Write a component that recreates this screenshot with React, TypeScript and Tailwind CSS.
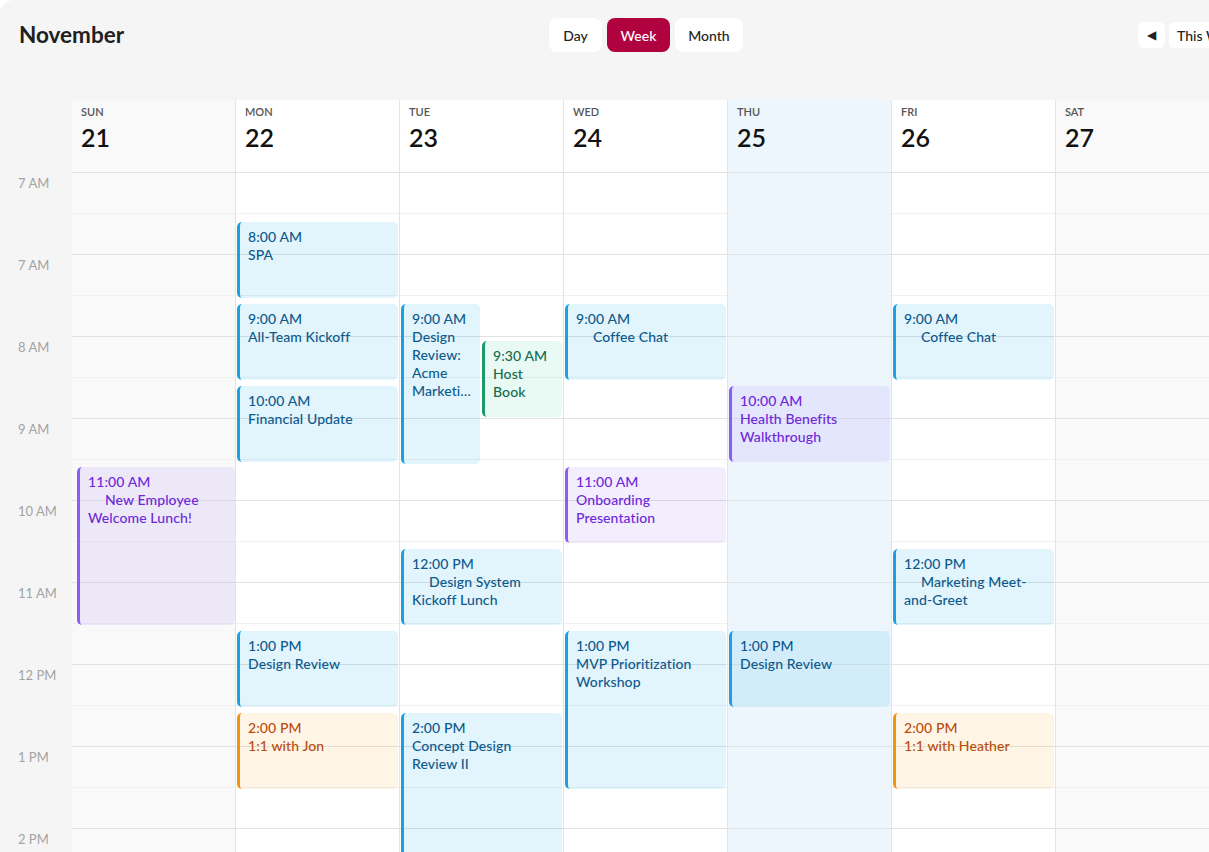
import React from 'react'

type Tone = 'blue' | 'green' | 'purple' | 'orange'

interface CalEvent {
  time: string
  title: string
  top: number
  height: number
  tone: Tone
  indent?: boolean
  clamp?: boolean
  left?: string
}

const toneClass: Record<Tone, string> = {
  blue: 'bg-[rgba(14,165,233,0.12)] border-[#1ba1e2] text-[#0d5a8c]',
  green: 'bg-[rgba(16,185,129,0.09)] border-[#1a9a6a] text-[#136b4a]',
  purple: 'bg-[rgba(139,92,246,0.1)] border-[#8b5cf6] text-[#6d28d9]',
  orange: 'bg-[rgba(245,158,11,0.1)] border-[#f0950e] text-[#b94d0c]',
}

const days: { abbr: string; date: string; bg: string; events: CalEvent[] }[] = [
  {
    abbr: 'SUN',
    date: '21',
    bg: 'bg-[#f9f9f9]',
    events: [
      { time: '11:00 AM', title: 'New Employee Welcome Lunch!', top: 294, height: 158, tone: 'purple', indent: true, left: 'left-[5px] right-0' },
    ],
  },
  {
    abbr: 'MON',
    date: '22',
    bg: 'bg-white',
    events: [
      { time: '8:00 AM', title: 'SPA', top: 49, height: 76, tone: 'blue' },
      { time: '9:00 AM', title: 'All-Team Kickoff', top: 131, height: 76, tone: 'blue' },
      { time: '10:00 AM', title: 'Financial Update', top: 213, height: 76, tone: 'blue' },
      { time: '1:00 PM', title: 'Design Review', top: 458, height: 76, tone: 'blue' },
      { time: '2:00 PM', title: '1:1 with Jon', top: 540, height: 76, tone: 'orange' },
    ],
  },
  {
    abbr: 'TUE',
    date: '23',
    bg: 'bg-white',
    events: [
      { time: '9:00 AM', title: 'Design Review: Acme Marketing Site', top: 131, height: 160, tone: 'blue', clamp: true, left: 'left-[1px] w-[79px]' },
      { time: '9:30 AM', title: 'Host Book', top: 168, height: 76, tone: 'green', left: 'left-[82px] right-[1px]' },
      { time: '12:00 PM', title: 'Design System Kickoff Lunch', top: 376, height: 76, tone: 'blue', indent: true },
      { time: '2:00 PM', title: 'Concept Design Review II', top: 540, height: 200, tone: 'blue' },
    ],
  },
  {
    abbr: 'WED',
    date: '24',
    bg: 'bg-white',
    events: [
      { time: '9:00 AM', title: 'Coffee Chat', top: 131, height: 76, tone: 'blue', indent: true },
      { time: '11:00 AM', title: 'Onboarding Presentation', top: 294, height: 76, tone: 'purple' },
      { time: '1:00 PM', title: 'MVP Prioritization Workshop', top: 458, height: 158, tone: 'blue' },
    ],
  },
  {
    abbr: 'THU',
    date: '25',
    bg: 'bg-[#eef6fd]',
    events: [
      { time: '10:00 AM', title: 'Health Benefits Walkthrough', top: 213, height: 76, tone: 'purple' },
      { time: '1:00 PM', title: 'Design Review', top: 458, height: 76, tone: 'blue' },
    ],
  },
  {
    abbr: 'FRI',
    date: '26',
    bg: 'bg-white',
    events: [
      { time: '9:00 AM', title: 'Coffee Chat', top: 131, height: 76, tone: 'blue', indent: true },
      { time: '12:00 PM', title: 'Marketing Meet-and-Greet', top: 376, height: 76, tone: 'blue', indent: true },
      { time: '2:00 PM', title: '1:1 with Heather', top: 540, height: 76, tone: 'orange' },
    ],
  },
  {
    abbr: 'SAT',
    date: '27',
    bg: 'bg-[#f9f9f9]',
    events: [],
  },
]

const hours = ['7 AM', '7 AM', '8 AM', '9 AM', '10 AM', '11 AM', '12 PM', '1 PM', '2 PM']

function EventCard({ ev }: { ev: CalEvent }) {
  return (
    <div
      className={`absolute ${ev.left ?? 'left-[1px] right-[1px]'} rounded-[5px] border-l-[3px] pl-[8px] pr-[6px] pt-[6px] text-[14px] leading-[18px] font-medium tracking-[0.1px] overflow-hidden ${toneClass[ev.tone]}`}
      style={{ top: ev.top, height: ev.height }}
    >
      <div>{ev.time}</div>
      <div className={`${ev.indent ? 'indent-[17px]' : ''} ${ev.clamp ? 'line-clamp-4' : ''}`}>{ev.title}</div>
    </div>
  )
}

export default function App() {
  return (
    <div className="w-[1209px] h-[852px] overflow-hidden bg-white" style={{ fontFamily: 'Lato, "Liberation Sans", sans-serif' }}>
      <div className="w-full h-full bg-[#f5f5f5] rounded-tl-[14px] overflow-hidden">
        {/* Header */}
        <div className="flex items-center h-[70px] pl-[19px] whitespace-nowrap">
          <h1 className="w-[530px] shrink-0 text-[22.5px] font-bold text-[#1f1f1f]">November</h1>
          <div className="flex shrink-0 gap-[5px] text-[14px] font-medium">
            <button className="h-[34px] w-[53px] rounded-lg bg-white text-[#222]">Day</button>
            <button className="h-[34px] w-[63px] rounded-lg bg-[#b0023f] text-white">Week</button>
            <button className="h-[34px] w-[68px] rounded-lg bg-white text-[#222]">Month</button>
          </div>
          <div className="flex shrink-0 gap-[4px] ml-[395px] text-[14px] font-medium">
            <button className="h-[26px] w-[27px] rounded-md bg-white flex items-center justify-center text-[#222] text-[12px]">◀</button>
            <button className="h-[26px] w-[90px] rounded-md bg-white text-[#222] text-left pl-[8px]">This Week</button>
          </div>
        </div>

        {/* Grid */}
        <div className="flex mt-[30px]">
          <div className="w-[72px] shrink-0 pt-[73px]">
            {hours.map((h, i) => (
              <div key={i} className="h-[82px] pl-[18px] pt-[2px] text-[13px] leading-[16px] text-[#a3a3a3]">
                {h}
              </div>
            ))}
          </div>
          {days.map((d) => (
            <div key={d.abbr} className={`w-[164px] shrink-0 border-r-[1.5px] border-[#e4e4e4] ${d.bg}`}>
              <div className="h-[73px] border-b border-[#e2e2e2] pl-[9px] pt-[5px]">
                <div className="text-[11px] leading-[14px] font-semibold text-[#555]">{d.abbr}</div>
                <div className="mt-[3px] text-[25px] leading-[30px] font-semibold text-[#111]">{d.date}</div>
              </div>
              <div className="relative">
                {hours.map((_, i) => (
                  <div key={i}>
                    <div className="h-[41px] border-b border-[#f1f1f1]" />
                    <div className="h-[41px] border-b border-[#e2e2e2]" />
                  </div>
                ))}
                {d.events.map((ev, i) => (
                  <EventCard key={i} ev={ev} />
                ))}
              </div>
            </div>
          ))}
        </div>
      </div>
    </div>
  )
}
